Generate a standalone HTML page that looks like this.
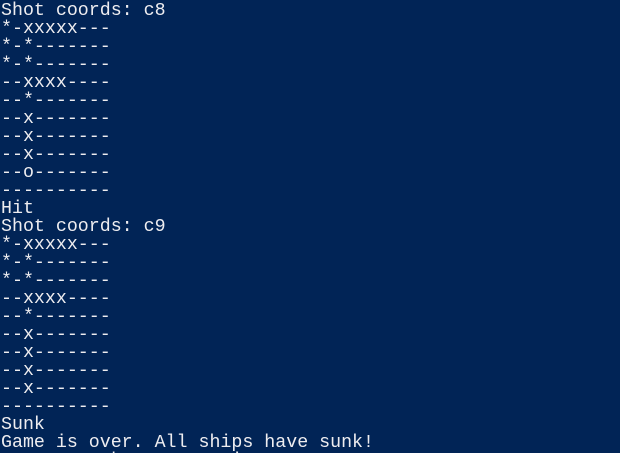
<!DOCTYPE html>
<html><head><meta charset="utf-8"><style>
html,body{margin:0;padding:0;background:#012456;width:620px;height:453px;overflow:hidden}
pre{margin:0;padding:2px 0 0 1px;color:#eeedf0;font-family:"Liberation Mono",monospace;font-size:18.3px;line-height:18px;white-space:pre}
</style></head><body><pre>Shot coords: c8
*-xxxxx---
*-*-------
*-*-------
--xxxx----
--*-------
--x-------
--x-------
--x-------
--o-------
----------
Hit
Shot coords: c9
*-xxxxx---
*-*-------
*-*-------
--xxxx----
--*-------
--x-------
--x-------
--x-------
--x-------
----------
Sunk
Game is over. All ships have sunk!
Press any key to continue . . .</pre></body></html>
